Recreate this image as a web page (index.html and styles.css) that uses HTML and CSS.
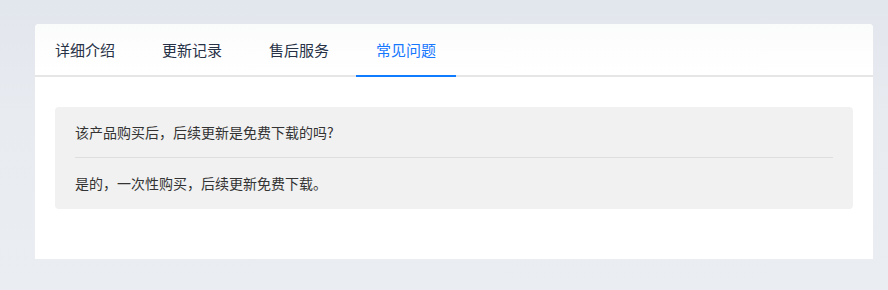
FILE: index.html
```html
<!DOCTYPE html>
<html lang="zh-CN">
<head>
    <meta charset="UTF-8">
    <meta name="viewport" content="width=device-width, initial-scale=1.0">
    <title>常见问题</title>
    <link rel="stylesheet" href="styles.css">
</head>
<body>
    <div class="detail-box">
        <div class="tabs">
            <div class="tab">详细介绍</div>
            <div class="tab">更新记录</div>
            <div class="tab">售后服务</div>
            <div class="tab active">常见问题</div>
        </div>
        <div class="tab-body">
            <div class="faq">
                <div class="faq-q">该产品购买后，后续更新是免费下载的吗?</div>
                <div class="faq-a">是的，一次性购买，后续更新免费下载。</div>
            </div>
        </div>
    </div>
</body>
</html>
```

FILE: styles.css
```css
html {
    background: linear-gradient(180deg, #e2e6ed 0%, #e8ebf0 40%, #eaedf2 100%);
    min-height: 100%;
}
body {
    margin: 0;
    padding: 24px 15px 0 35px;
    font-family: "Noto Sans CJK SC", "Microsoft YaHei", sans-serif;
    color: #333;
}
.detail-box {
    width: 838px;
    background: #fff;
    border-radius: 4px 4px 0 0;
}
.tabs {
    display: flex;
    gap: 7px;
    height: 51px;
    border-bottom: 2px solid #e6e6e6;
    background: linear-gradient(180deg, #fafbfb 0%, #fdfdfd 40%, #fff 100%);
    border-radius: 4px 4px 0 0;
}
.tab {
    width: 100px;
    text-align: center;
    font-size: 15px;
    line-height: 51px;
    color: #283247;
    margin-bottom: -2px;
    border-bottom: 2px solid transparent;
}
.tab.active {
    color: #1677ff;
    border-bottom-color: #0f7bff;
}
.tab-body {
    padding: 30px 20px 50px;
}
.faq {
    background: #f1f1f1;
    border-radius: 4px;
    padding: 0 20px;
    font-size: 14px;
}
.faq-q {
    line-height: 50px;
    border-bottom: 1px solid #dedede;
}
.faq-a {
    line-height: 51px;
}
```
